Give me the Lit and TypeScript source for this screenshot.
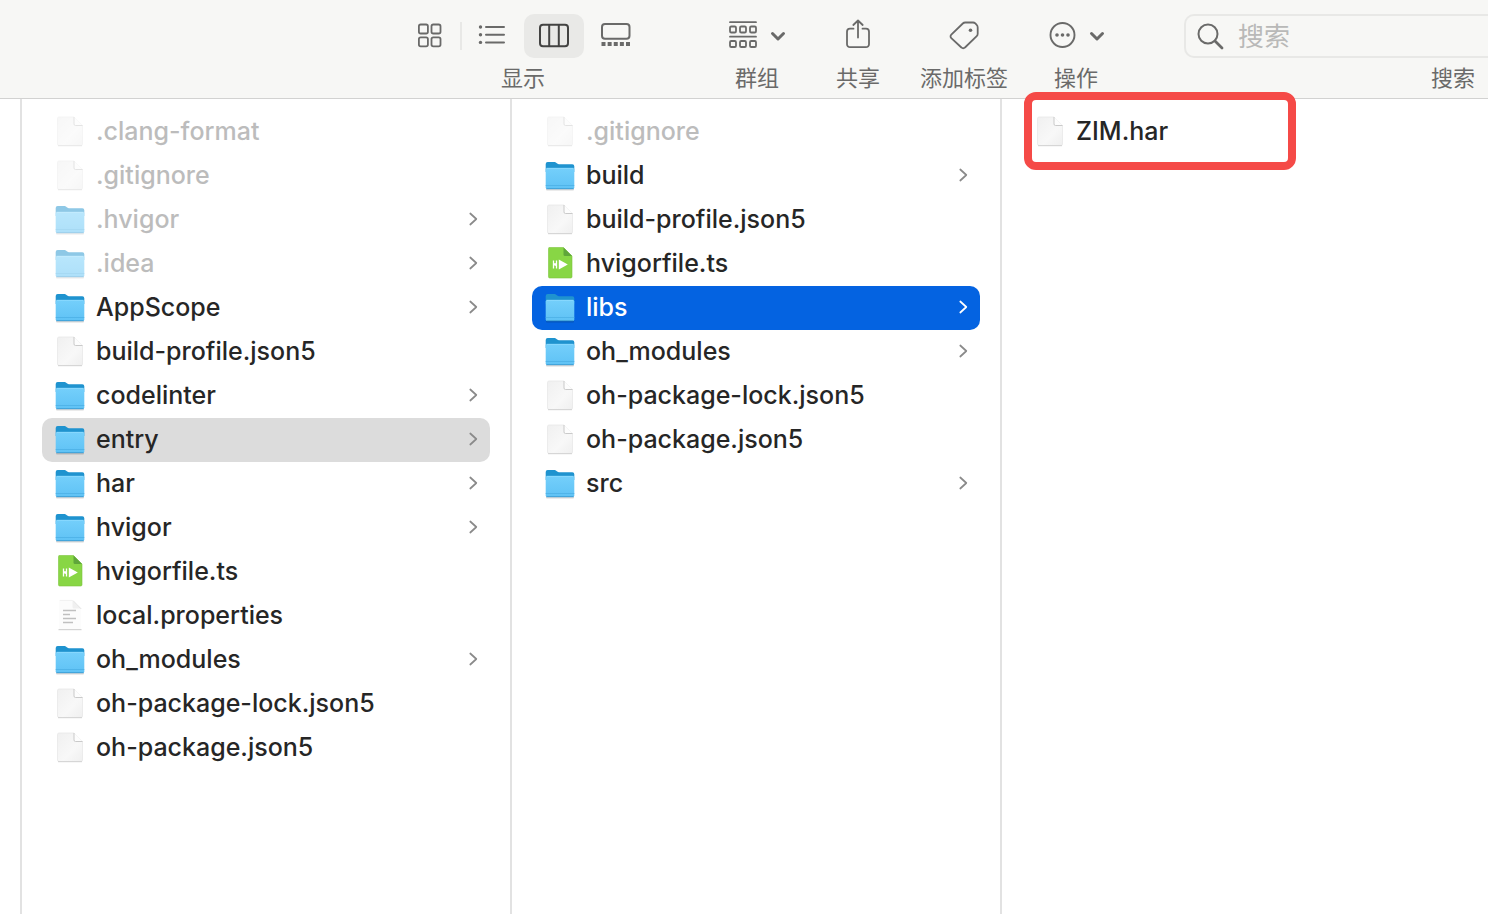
import { LitElement, html, svg, css, nothing } from "lit";
import { customElement, property, state } from "lit/decorators.js";
import { classMap } from "lit/directives/class-map.js";

type Kind = "folder" | "file" | "script" | "text";
interface Entry {
  name: string;
  kind: Kind;
  hidden?: boolean;
}

const PROJECT: Entry[] = [
  { name: ".clang-format", kind: "file", hidden: true },
  { name: ".gitignore", kind: "file", hidden: true },
  { name: ".hvigor", kind: "folder", hidden: true },
  { name: ".idea", kind: "folder", hidden: true },
  { name: "AppScope", kind: "folder" },
  { name: "build-profile.json5", kind: "file" },
  { name: "codelinter", kind: "folder" },
  { name: "entry", kind: "folder" },
  { name: "har", kind: "folder" },
  { name: "hvigor", kind: "folder" },
  { name: "hvigorfile.ts", kind: "script" },
  { name: "local.properties", kind: "text" },
  { name: "oh_modules", kind: "folder" },
  { name: "oh-package-lock.json5", kind: "file" },
  { name: "oh-package.json5", kind: "file" },
];

const ENTRY: Entry[] = [
  { name: ".gitignore", kind: "file", hidden: true },
  { name: "build", kind: "folder" },
  { name: "build-profile.json5", kind: "file" },
  { name: "hvigorfile.ts", kind: "script" },
  { name: "libs", kind: "folder" },
  { name: "oh_modules", kind: "folder" },
  { name: "oh-package-lock.json5", kind: "file" },
  { name: "oh-package.json5", kind: "file" },
  { name: "src", kind: "folder" },
];

const LIBS: Entry[] = [{ name: "ZIM.har", kind: "file" }];

const art = {
  folder: svg`
    <defs>
      <linearGradient id="front" x1="0" y1="0" x2="0" y2="1">
        <stop offset="0" stop-color="#74cffb" /><stop offset="1" stop-color="#5fc2f5" />
      </linearGradient>
    </defs>
    <path d="M2 28.5h28v1a1 1 0 0 1-1 1H3a1 1 0 0 1-1-1z" fill="#000" opacity=".16" />
    <path d="M1.700 4a2 2 0 0 1 2-2h6.200c1.200 0 1.800.3 2.600 1l.7.600c.6.500 1 .6 1.800.6H28.300a2 2 0 0 1 2 2V12H1.700z" fill="#1f93cf" />
    <path d="M1.700 9.500a1.500 1.500 0 0 1 1.500-1.500h25.600a1.500 1.500 0 0 1 1.500 1.500V27.500a1.500 1.500 0 0 1-1.500 1.500H3.200a1.500 1.500 0 0 1-1.500-1.500z" fill="url(#front)" />
    <path d="M2.500 8.300h27" stroke="#92dcff" stroke-width=".8" />
    <path d="M1.700 25.500h28.600" stroke="#4bb0e6" stroke-width=".8" />
    <path d="M2.500 28.700h27" stroke="#3a9bd2" stroke-width=".9" />`,
  file: svg`
    <defs>
      <linearGradient id="paper" x1="0" y1="0" x2="1" y2="1">
        <stop offset="0" stop-color="#f0f0f0" /><stop offset=".6" stop-color="#f8f8f8" /><stop offset="1" stop-color="#efefef" />
      </linearGradient>
    </defs>
    <path d="M5 1h15l8.500 8.500V28a1.500 1.500 0 0 1-1.500 1.500H5A1.500 1.500 0 0 1 3.500 28V2.500A1.500 1.500 0 0 1 5 1z" fill="url(#paper)" stroke="#e2e2e2" stroke-width=".6" />
    <path d="M4 29.700h24" stroke="#cacaca" stroke-width=".8" />
    <path d="M20 1v7a1.500 1.500 0 0 0 1.500 1.500h7z" fill="#fdfdfd" />
    <path d="M20 1v7a1.500 1.500 0 0 0 1.500 1.500h7" fill="none" stroke="#c4c4c4" stroke-width=".9" />`,
  script: svg`
    <path d="M6-.5h13.500l8.500 8.500V28.800a1.200 1.200 0 0 1-1.200 1.200H5.700a1.200 1.200 0 0 1-1.200-1.200V.7A1.200 1.200 0 0 1 6-.5z" fill="#88d645" stroke="#7cc43c" stroke-width=".6" />
    <path d="M19.500-.5V6.500A1.500 1.500 0 0 0 21 8h7z" fill="#5fa63a" />
    <path d="M9.500 12.500v8M12.500 12.500v8M9.500 17l3.500-2M10 15.500l3 3" stroke="#fff" stroke-width="1.300" fill="none" />
    <path d="M14.800 11.600l9 4.900-9 4.900z" fill="#fff" />`,
  text: svg`
    <path d="M6 .5h13l8 8.500V30H5V1.500z" fill="#fcfcfc" />
    <path d="M5.500 .4h13" stroke="#ececec" stroke-width=".7" />
    <path d="M18.500.5v6.500a1.500 1.500 0 0 0 1.500 1.500h7z" fill="#f0f0f0" />
    <path d="M19 .5l8.300 8.500" stroke="#dedede" stroke-width=".8" />
    <path d="M4.500 29.700h23" stroke="#c6c6c6" stroke-width=".9" />
    <path d="M9 10.500h13M9 14.500h7M9 18.500h13M9 22.500h10" stroke="#c0c0c0" stroke-width="1.600" />`,
};

@customElement("finder-column")
class FinderColumn extends LitElement {
  @property({ attribute: false }) entries: Entry[] = [];
  @property() selected = "";
  @property() marked = "";
  @property({ type: Boolean }) active = false;

  static styles = css`
    :host {
      display: block;
      box-sizing: border-box;
    }
    .list {
      list-style: none;
      margin: 0;
      padding: 11px 20px;
    }
    .item {
      position: relative;
    }
    .row {
      display: flex;
      align-items: center;
      gap: 10px;
      width: 100%;
      height: 44px;
      padding: 0 12px;
      border: 0;
      border-radius: 10px;
      background: none;
      color: #262626;
      font: 500 25px/32px Inter, "Noto Sans CJK SC", sans-serif;
      text-align: left;
    }
    .icon {
      flex: none;
      width: 32px;
      height: 32px;
      overflow: visible;
    }
    .name {
      flex: 1;
      white-space: nowrap;
      padding-bottom: 2px;
    }
    .chevron {
      flex: none;
      width: 10px;
      height: 14px;
      padding-bottom: 2px;
      fill: none;
      stroke: #8a8a8a;
      stroke-width: 1.7;
      stroke-linecap: round;
      stroke-linejoin: round;
    }
    .hidden .icon {
      opacity: 0.5;
    }
    .hidden .name {
      color: #bcbcbc;
    }
    .selected {
      background: #dcdcdc;
    }
    .selected.active {
      background: #0463e1;
      color: #fff;
    }
    .selected.active .chevron {
      stroke: #fff;
    }
    .mark {
      position: absolute;
      z-index: 1;
      top: -18px;
      left: 2px;
      box-sizing: border-box;
      width: 272px;
      height: 78px;
      border: 8px solid #f54a47;
      border-radius: 12px;
      pointer-events: none;
    }
  `;

  render() {
    return html`<ul class="list">
      ${this.entries.map(
        (e) => html`<li class="item">
          <button
            type="button"
            class=${classMap({
              row: true,
              hidden: !!e.hidden,
              selected: e.name === this.selected,
              active: this.active,
            })}
            @click=${() => (this.selected = e.name)}
          >
            <svg class="icon" viewBox="0 0 32 32" aria-hidden="true">${art[e.kind]}</svg>
            <span class="name">${e.name}</span>
            ${e.kind === "folder"
              ? html`<svg class="chevron" viewBox="0 0 10 14" aria-hidden="true"><path d="M2.300 1.500l6 5.500-6 5.500" /></svg>`
              : nothing}
          </button>
          ${e.name === this.marked ? html`<span class="mark"></span>` : nothing}
        </li>`
      )}
    </ul>`;
  }
}

const VIEWS = [
  {
    id: "图标",
    icon: svg`<g stroke-width="1.800"><rect x="4.900" y="4.500" width="9" height="9" rx="1.800" /><rect x="17.500" y="4.500" width="9" height="9" rx="1.800" /><rect x="4.900" y="17.300" width="9" height="9" rx="1.800" /><rect x="17.500" y="17.300" width="9" height="9" rx="1.800" /></g>`,
  },
  {
    id: "列表",
    icon: svg`<path d="M10 7h18M10 14.700h18M10 22.400h18" /><g fill="currentColor" stroke="none"><circle cx="4.500" cy="7" r="1.700" /><circle cx="4.500" cy="14.700" r="1.700" /><circle cx="4.500" cy="22.400" r="1.700" /></g>`,
  },
  {
    id: "分栏",
    icon: svg`<rect x="2" y="4.700" width="28" height="21.500" rx="3" /><path d="M11.200 5v21M20.800 5v21" />`,
  },
  {
    id: "画廊",
    icon: svg`<rect x="2" y="4" width="27.500" height="14.700" rx="3" /><path d="M1.500 24h28.500" stroke-width="4" stroke-linecap="butt" stroke-dasharray="4 2.125" />`,
  },
];

@customElement("app-root")
class AppRoot extends LitElement {
  @state() view = "分栏";

  static styles = css`
    :host {
      display: flex;
      flex-direction: column;
      min-height: 100vh;
      background: #fff;
      font-family: Inter, "Noto Sans CJK SC", sans-serif;
      color: #6a6a69;
      overflow: hidden;
    }
    button,
    input {
      font: inherit;
      color: inherit;
      border: 0;
      padding: 0;
      margin: 0;
      background: none;
    }
    .toolbar {
      display: flex;
      align-items: flex-start;
      box-sizing: border-box;
      height: 99px;
      padding: 14px 0 0 400px;
      background: #f7f7f5;
      border-bottom: 1px solid #d2d2d1;
    }
    .tool {
      display: flex;
      flex: none;
      flex-direction: column;
      align-items: center;
      gap: 4px;
    }
    .face {
      display: flex;
      align-items: center;
      justify-content: center;
      gap: 14px;
      height: 44px;
    }
    .label {
      font-size: 22px;
      line-height: 32px;
      white-space: nowrap;
    }
    .views {
      display: flex;
      gap: 2px;
    }
    .view {
      display: flex;
      align-items: center;
      justify-content: center;
      width: 60px;
      height: 44px;
      border-radius: 10px;
    }
    .view.on {
      background: #e9e9e7;
      color: #434342;
    }
    .rule {
      width: 2px;
      height: 28px;
      margin: 8px -2px 0;
      background: #e8e8e6;
    }
    .glyph {
      display: block;
      flex: none;
      width: 32px;
      height: 32px;
      overflow: visible;
      fill: none;
      stroke: currentColor;
      stroke-width: 2;
      stroke-linecap: round;
      stroke-linejoin: round;
    }
    .down {
      width: 14px;
      height: 10px;
      stroke-width: 3;
    }
    .compact {
      width: 28px;
    }
    .group {
      margin-left: 83px;
    }
    .share {
      margin-left: 51px;
    }
    .tag,
    .action {
      margin-left: 40px;
    }
    .search {
      display: flex;
      flex: 1;
      flex-direction: column;
      gap: 4px;
      min-width: 0;
      margin-left: 80px;
    }
    .field {
      display: flex;
      align-items: center;
      gap: 12px;
      box-sizing: border-box;
      height: 44px;
      padding-left: 8px;
      border: 2px solid #e8e8e6;
      border-right: 0;
      border-radius: 10px 0 0 10px;
    }
    .input {
      flex: 1;
      min-width: 0;
      padding-top: 2px;
      font-size: 26px;
      line-height: 36px;
      outline: none;
    }
    .input::placeholder {
      color: #b9b9b8;
      opacity: 1;
    }
    .search .label {
      align-self: flex-end;
      padding-right: 13px;
    }
    .browser {
      display: grid;
      grid-template-columns: 20px 490px 490px 1fr;
      flex: 1;
    }
    .column {
      border-left: 2px solid #e2e2e2;
    }
  `;

  private down = html`<svg class="glyph down" viewBox="0 0 14 10" aria-hidden="true"><path d="M1.500 2.500L7 8l5.500-5.500" /></svg>`;

  render() {
    return html`
      <header class="toolbar">
        <div class="tool" role="group" aria-labelledby="view-label">
          <div class="views">
            ${VIEWS.map(
              (v, i) => html`<button
                  type="button"
                  class=${classMap({ view: true, on: v.id === this.view })}
                  aria-label=${v.id}
                  @click=${() => (this.view = v.id)}
                >
                  <svg class="glyph" viewBox="0 0 32 32" aria-hidden="true">${v.icon}</svg>
                </button>
                ${i === 0 ? html`<span class="rule"></span>` : nothing}`
            )}
          </div>
          <span class="label" id="view-label">显示</span>
        </div>

        <button type="button" class="tool group">
          <span class="face">
            <svg class="glyph compact" viewBox="2 0 28 32" aria-hidden="true">
              <g stroke-width="1.800">
                <path d="M3 2.200h26M3 16.700h26" />
                <rect x="3" y="6.500" width="6" height="6" rx="1.300" /><rect x="13" y="6.500" width="6" height="6" rx="1.300" /><rect x="23" y="6.500" width="6" height="6" rx="1.300" />
                <rect x="3" y="21" width="6" height="6" rx="1.300" /><rect x="13" y="21" width="6" height="6" rx="1.300" /><rect x="23" y="21" width="6" height="6" rx="1.300" />
              </g>
            </svg>
            ${this.down}
          </span>
          <span class="label">群组</span>
        </button>

        <button type="button" class="tool share">
          <span class="face">
            <svg class="glyph" viewBox="0 0 32 32" aria-hidden="true">
              <path d="M11.500 8.700H8a3 3 0 0 0-3 3v12.500a3 3 0 0 0 3 3h16a3 3 0 0 0 3-3V11.700a3 3 0 0 0-3-3h-3.500M16 17.500V1M11.300 5L16 .5 20.700 5" stroke-width="1.800" />
            </svg>
          </span>
          <span class="label">共享</span>
        </button>

        <button type="button" class="tool tag">
          <span class="face">
            <svg class="glyph" viewBox="0 0 32 32" aria-hidden="true">
              <path d="M17.300 2.500H25c1 0 1.600.2 2.300.9l1.400 1.500c.8.800 1 1.500 1 2.500v6.300c0 1-.3 1.700-1 2.400L17 27.500a2.500 2.500 0 0 1-3.600 0L3.300 18.100a2.300 2.300 0 0 1 0-3.400L14.800 3.500c.7-.7 1.500-1 2.500-1z" stroke-width="1.800" />
              <circle cx="22.500" cy="10.200" r="1.800" fill="currentColor" stroke="none" />
            </svg>
          </span>
          <span class="label">添加标签</span>
        </button>

        <button type="button" class="tool action">
          <span class="face">
            <svg class="glyph compact" viewBox="2 0 28 32" aria-hidden="true">
              <circle cx="16.500" cy="15" r="12" stroke-width="1.900" />
              <g fill="currentColor" stroke="none"><circle cx="11" cy="15" r="1.800" /><circle cx="16.500" cy="15" r="1.800" /><circle cx="22" cy="15" r="1.800" /></g>
            </svg>
            ${this.down}
          </span>
          <span class="label">操作</span>
        </button>

        <div class="search">
          <div class="field">
            <svg class="glyph" viewBox="0 0 32 32" aria-hidden="true">
              <circle cx="14" cy="14" r="9.500" /><path d="M21 21l7 7" stroke-width="2.800" />
            </svg>
            <input class="input" id="search" type="text" placeholder="搜索" />
          </div>
          <label class="label" for="search">搜索</label>
        </div>
      </header>

      <main class="browser">
        <span></span>
        <finder-column class="column" .entries=${PROJECT} selected="entry"></finder-column>
        <finder-column class="column" .entries=${ENTRY} selected="libs" active></finder-column>
        <finder-column class="column" .entries=${LIBS} marked="ZIM.har"></finder-column>
      </main>
    `;
  }
}
